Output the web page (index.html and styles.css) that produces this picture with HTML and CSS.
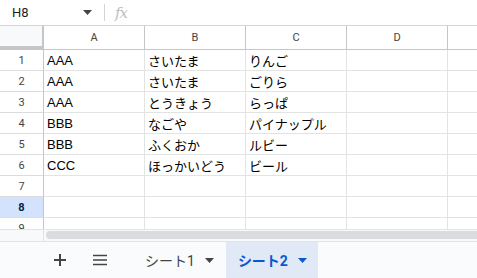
FILE: index.html
```html
<!DOCTYPE html>
<html lang="ja">
<head>
  <meta charset="UTF-8" />
  <title>シート2</title>
  <link rel="stylesheet" href="styles.css">
</head>
<body>
  <div class="formula-bar">
    <div class="name-box">
      <span>H8</span>
      <svg class="caret" width="9" height="5" viewBox="0 0 9 5"><path d="M0 0h9L4.5 5z" fill="#444"/></svg>
    </div>
    <div class="sep"></div>
    <span class="fx">fx</span>
  </div>

  <div class="sheet">
    <div class="corner"></div>
    <div class="col-head">A</div>
    <div class="col-head">B</div>
    <div class="col-head">C</div>
    <div class="col-head">D</div>
    <div class="col-head"></div>

    <div class="row-head">1</div><div class="cell">AAA</div><div class="cell">さいたま</div><div class="cell">りんご</div><div class="cell"></div><div class="cell"></div>
    <div class="row-head">2</div><div class="cell">AAA</div><div class="cell">さいたま</div><div class="cell">ごりら</div><div class="cell"></div><div class="cell"></div>
    <div class="row-head">3</div><div class="cell">AAA</div><div class="cell">とうきょう</div><div class="cell">らっぱ</div><div class="cell"></div><div class="cell"></div>
    <div class="row-head">4</div><div class="cell">BBB</div><div class="cell">なごや</div><div class="cell">パイナップル</div><div class="cell"></div><div class="cell"></div>
    <div class="row-head">5</div><div class="cell">BBB</div><div class="cell">ふくおか</div><div class="cell">ルビー</div><div class="cell"></div><div class="cell"></div>
    <div class="row-head">6</div><div class="cell">CCC</div><div class="cell">ほっかいどう</div><div class="cell">ビール</div><div class="cell"></div><div class="cell"></div>
    <div class="row-head">7</div><div class="cell"></div><div class="cell"></div><div class="cell"></div><div class="cell"></div><div class="cell"></div>
    <div class="row-head active">8</div><div class="cell"></div><div class="cell"></div><div class="cell"></div><div class="cell"></div><div class="cell"></div>
    <div class="row-head">9</div><div class="cell"></div><div class="cell"></div><div class="cell"></div><div class="cell"></div><div class="cell"></div>
  </div>

  <div class="hscroll">
    <div class="hscroll-left"></div>
    <div class="hscroll-track"><div class="thumb"></div></div>
  </div>

  <div class="tabs">
    <button class="icon-btn plus">
      <svg width="14" height="14" viewBox="0 0 14 14"><path d="M7 1v12M1 7h12" stroke="#444" stroke-width="2"/></svg>
    </button>
    <button class="icon-btn menu">
      <svg width="16" height="12" viewBox="0 0 16 12"><path d="M1 1.5h14M1 6h14M1 10.5h14" stroke="#444" stroke-width="1.6"/></svg>
    </button>
    <div class="tab first">
      <span>シート1</span>
      <svg width="9" height="5" viewBox="0 0 9 5"><path d="M0 0h9L4.5 5z" fill="#444"/></svg>
    </div>
    <div class="tab current">
      <span>シート2</span>
      <svg width="9" height="5" viewBox="0 0 9 5"><path d="M0 0h9L4.5 5z" fill="#0b57d0"/></svg>
    </div>
  </div>
</body>
</html>
```

FILE: styles.css
```css
body, html {
  margin: 0;
  padding: 0;
  width: 477px;
  height: 278px;
  overflow: hidden;
  background: #fff;
  font-family: Roboto, "Noto Sans CJK JP", sans-serif;
}

body {
  display: flex;
  flex-direction: column;
}

.formula-bar {
  height: 25px;
  border-bottom: 1px solid #d4d4d4;
  display: flex;
  align-items: center;
  flex-shrink: 0;
}

.name-box {
  width: 93px;
  padding-left: 12px;
  box-sizing: border-box;
  display: flex;
  align-items: center;
  justify-content: space-between;
  font-size: 13px;
  color: #1f1f1f;
}

.name-box .caret {
  margin-right: 1px;
}

.sep {
  width: 1px;
  height: 17px;
  background: #d4d4d4;
  margin-left: 11px;
}

.fx {
  margin-left: 10px;
  font-family: "DejaVu Serif", serif;
  font-style: italic;
  font-size: 15px;
  color: #bdbdbd;
  letter-spacing: -1px;
}

.sheet {
  height: 203px;
  flex-shrink: 0;
  overflow: hidden;
  display: grid;
  grid-template-columns: 44px repeat(5, 101px);
  grid-template-rows: 24px repeat(9, 21px);
}

.corner {
  background: #f8f9fa;
  border-right: 2px solid #c4c7c5;
  border-bottom: 4px solid #c4c7c5;
}

.col-head {
  border-right: 1px solid #c4c7c5;
  border-bottom: 1px solid #c4c7c5;
  display: flex;
  align-items: center;
  justify-content: center;
  font-size: 11px;
  color: #444;
}

.row-head {
  border-right: 1px solid #c4c7c5;
  border-bottom: 1px solid #dcdcdc;
  display: flex;
  align-items: center;
  justify-content: center;
  font-size: 11px;
  color: #444;
}

.row-head.active {
  background: #d3e3fd;
  color: #041e49;
  font-weight: 700;
}

.cell {
  border-right: 1px solid #e2e3e3;
  border-bottom: 1px solid #e2e3e3;
  padding: 0 3px;
  display: flex;
  align-items: center;
  font-family: "Liberation Sans", "Noto Sans CJK JP", sans-serif;
  font-size: 13px;
  color: #000;
  white-space: nowrap;
  overflow: hidden;
}

.col-head, .row-head, .corner, .cell {
  box-sizing: border-box;
}

.hscroll {
  height: 13px;
  flex-shrink: 0;
  display: flex;
  border-top: 1px solid #e2e3e3;
  border-bottom: 1px solid #e2e3e3;
  box-sizing: border-box;
  background: #f8f9fa;
}

.hscroll-left {
  width: 44px;
  border-right: 1px solid #e2e3e3;
  box-sizing: border-box;
}

.hscroll-track {
  flex: 1;
  padding: 1px 0 0 2px;
}

.thumb {
  height: 8px;
  border-radius: 4px 0 0 4px;
  background: #dadce0;
}

.tabs {
  flex: 1;
  background: #f9fbfd;
  display: flex;
  align-items: stretch;
  padding-left: 46px;
}

.icon-btn {
  border: none;
  background: none;
  padding: 0;
  width: 28px;
  display: flex;
  align-items: center;
  justify-content: center;
}

.menu {
  margin-left: 12px;
}

.tab {
  display: flex;
  align-items: center;
  gap: 10px;
  padding: 0 11px 0 12px;
  font-size: 14px;
  color: #444;
}

.tab.first {
  margin-left: 19px;
}

.tab.current {
  background: #e1e9f7;
  color: #0b57d0;
  font-weight: 700;
  margin-left: 1px;
}
```
